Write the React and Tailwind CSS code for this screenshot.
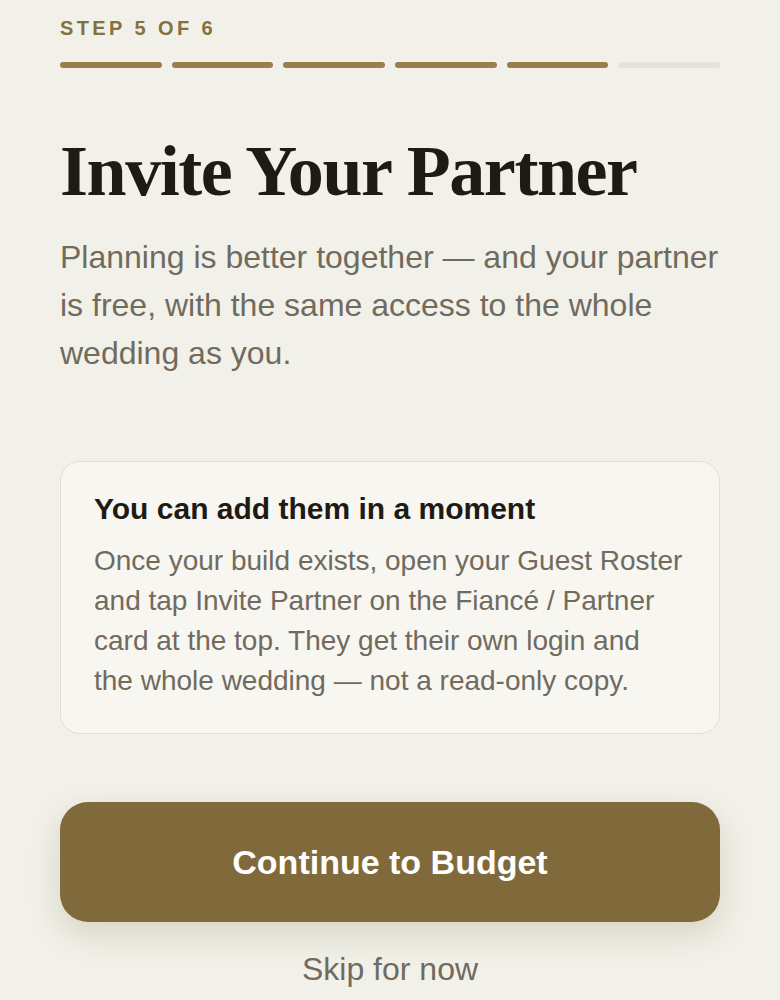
import React from "react"

const STEPS = [1, 2, 3, 4, 5, 6]
const CURRENT = 5

export default function App() {
  return (
    <div className="min-h-screen bg-[#f1f1e9] font-['Liberation_Sans',Arial,sans-serif]">
      <div className="px-[60px] pt-[13px] pb-10">

        {/* Step header */}
        <div className="text-[20px] leading-[30px] font-bold tracking-[0.17em] text-[#85703f]">
          STEP {CURRENT} OF {STEPS.length}
        </div>

        <div className="mt-[19px] grid grid-cols-6 gap-[10px]">
          {STEPS.map(s => (
            <div
              key={s}
              className={`h-[6px] rounded-full ${s <= CURRENT ? "bg-[#9a7f4b]" : "bg-[#e6e2d6]"}`}
            />
          ))}
        </div>

        {/* Title */}
        <h1 className="mt-[63px] font-['Liberation_Serif',serif] font-bold text-[72px] leading-[80px] tracking-[-0.02em] text-[#1f1a14]">
          Invite Your Partner
        </h1>

        <p className="mt-[22px] text-[32px] leading-[48px] text-[#716a5e]">
          Planning is better together — and your partner is free, with the same access to the whole wedding as you.
        </p>

        {/* Info card */}
        <div className="mt-[84px] rounded-[20px] border border-[#e2dfd2] bg-[#f7f6f1] px-[33px] pt-[29px] pb-[32px]">
          <div className="text-[30px] leading-[36px] font-bold text-[#1f1a14]">
            You can add them in a moment
          </div>
          <p className="mt-[14px] text-[28px] leading-[40px] text-[#716a5e]">
            Once your build exists, open your Guest Roster and tap Invite Partner on the Fiancé / Partner card at the top. They get their own login and the whole wedding — not a read-only copy.
          </p>
        </div>

        {/* Actions */}
        <button className="mt-[68px] w-full h-[120px] rounded-[28px] bg-[#806a3c] text-white text-[34px] font-bold shadow-[0_12px_32px_rgba(128,106,60,0.22)]">
          Continue to Budget
        </button>

        <div className="mt-[23px] text-center text-[32px] leading-[48px] text-[#716a5e]">
          Skip for now
        </div>

      </div>
    </div>
  )
}
